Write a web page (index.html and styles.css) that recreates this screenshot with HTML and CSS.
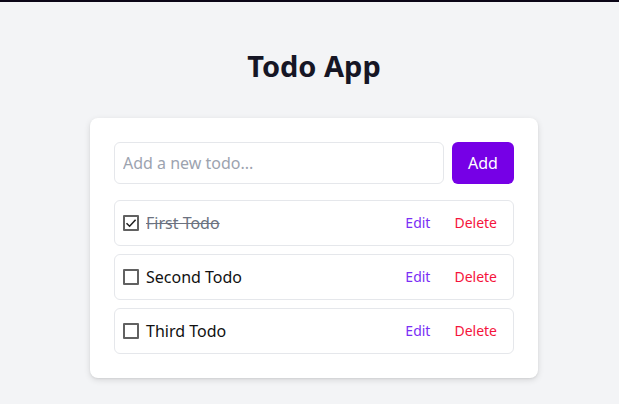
FILE: index.html
```html
<!DOCTYPE html>
<html lang="en">
<head>
<meta charset="utf-8">
<title>Todo App</title>
<link rel="stylesheet" href="styles.css">
</head>
<body>
<main class="page">
  <h1 class="title">Todo App</h1>
  <section class="card">
    <form class="add-form">
      <input class="add-input" type="text" placeholder="Add a new todo...">
      <button class="add-btn" type="button">Add</button>
    </form>
    <ul class="list">
      <li class="item">
        <span class="check checked"><svg viewBox="0 0 16 16" width="16" height="16"><path d="M3.5 8.2 L6.6 11.2 L12.6 4.8" fill="none" stroke="#222" stroke-width="1.6"/></svg></span>
        <span class="label done">First Todo</span>
        <button class="btn edit" type="button">Edit</button>
        <button class="btn delete" type="button">Delete</button>
      </li>
      <li class="item">
        <span class="check"></span>
        <span class="label">Second Todo</span>
        <button class="btn edit" type="button">Edit</button>
        <button class="btn delete" type="button">Delete</button>
      </li>
      <li class="item">
        <span class="check"></span>
        <span class="label">Third Todo</span>
        <button class="btn edit" type="button">Edit</button>
        <button class="btn delete" type="button">Delete</button>
      </li>
    </ul>
  </section>
</main>
</body>
</html>
```

FILE: styles.css
```css
* { box-sizing: border-box; }
html, body { margin: 0; padding: 0; }
body {
  background: #f3f4f6;
  border-top: 2px solid #0b0617;
  font-family: "Noto Sans", "Open Sans", sans-serif;
  color: #111827;
  min-height: 404px;
}
.page {
  display: flex;
  flex-direction: column;
  align-items: center;
  padding: 46px 0 0 9px;
}
.title {
  margin: 0 0 34px;
  font-size: 29px;
  line-height: 36px;
  font-weight: 700;
  color: #161625;
}
.card {
  width: 448px;
  background: #fff;
  border-radius: 8px;
  padding: 24px;
  box-shadow: 0 2px 6px rgba(0,0,0,0.12), 0 1px 2px rgba(0,0,0,0.06);
}
.add-form {
  display: flex;
  gap: 8px;
  margin: 0 0 16px;
}
.add-input {
  flex: 1;
  height: 42px;
  border: 1px solid #e5e7eb;
  border-radius: 6px;
  padding: 0 8px;
  font: inherit;
  font-size: 16px;
  color: #111827;
  outline: none;
}
.add-input::placeholder { color: #9ca3af; }
.add-btn {
  width: 62px;
  height: 42px;
  border: 0;
  border-radius: 6px;
  background: #7600e6;
  color: #fff;
  font: inherit;
  font-size: 16px;
}
.list {
  list-style: none;
  margin: 0;
  padding: 0;
  display: flex;
  flex-direction: column;
  gap: 8px;
}
.item {
  display: flex;
  align-items: center;
  height: 46px;
  padding: 0 8px;
  border: 1px solid #e5e7eb;
  border-radius: 6px;
}
.check {
  width: 16px;
  height: 16px;
  border: 2px solid #616161;
  border-radius: 1px;
  margin-right: 7px;
  display: flex;
  align-items: center;
  justify-content: center;
  flex: none;
}
.check svg { flex: none; }
.label {
  flex: 1;
  font-size: 16px;
  color: #111;
}
.label.done {
  text-decoration: line-through;
  color: #6b7280;
}
.btn {
  border: 0;
  background: none;
  font: inherit;
  font-size: 14px;
  padding: 0 8px;
  line-height: 20px;
}
.btn.edit { color: #7a2ff5; margin-right: 8px; }
.btn.delete { color: #f5143c; }
```
